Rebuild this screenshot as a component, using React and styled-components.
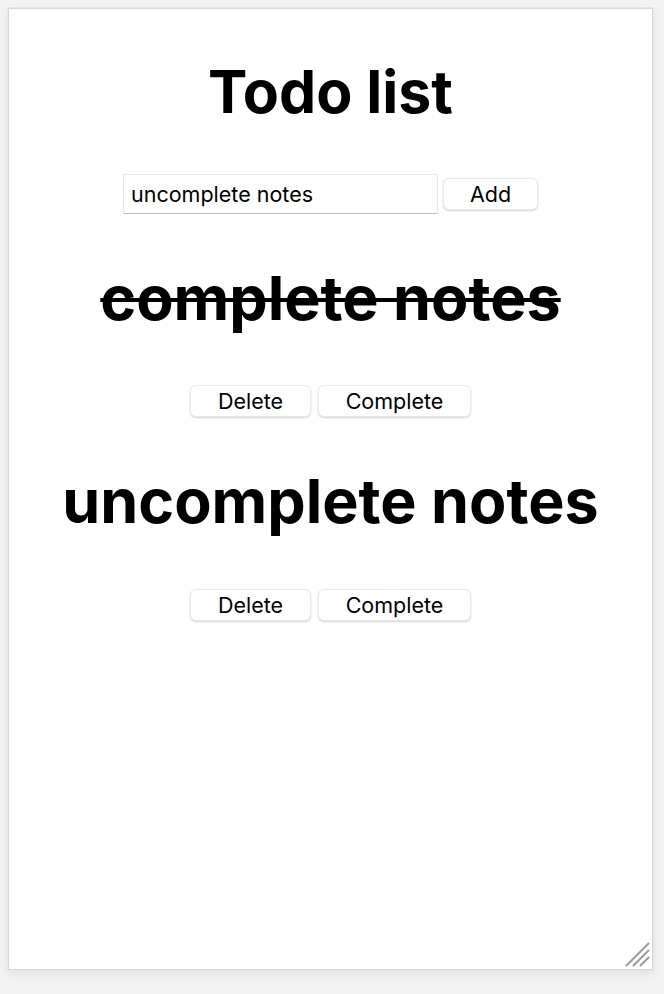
import React from "react";
import styled, { createGlobalStyle } from "styled-components";

const Global = createGlobalStyle`
  html, body { margin: 0; padding: 0; background: #f3f3f3; }
  body { font-family: Inter, "Noto Sans", sans-serif; color: #000; }
`;

const Stage = styled.div`
  padding: 8px 11px 22px 8px;
`;

const Panel = styled.div`
  position: relative;
  height: 960px;
  background: #fff;
  border: 1px solid #d6d6d6;
  box-shadow: 0 0 0 1px #e6e6e6, 0 4px 10px rgba(0, 0, 0, 0.08);
  display: flex;
  flex-direction: column;
  align-items: center;
`;

const Title = styled.h1`
  margin: 43px 0 0;
  font-size: 59px;
  line-height: 80px;
  font-weight: 700;
`;

const Form = styled.div`
  display: flex;
  align-items: center;
  gap: 5px;
  margin-top: 42px;
`;

const Input = styled.input`
  box-sizing: border-box;
  width: 315px;
  height: 40px;
  border: 1px solid #e6e6e6;
  border-bottom: 1px solid #bdbdbd;
  padding: 0 7px;
  font-family: Inter, sans-serif;
  font-size: 21.5px;
  color: #000;
  outline: none;
`;

const Button = styled.button`
  box-sizing: border-box;
  width: ${(p) => p.w}px;
  height: 32px;
  background: #fff;
  border: 1px solid #e8e8e8;
  border-radius: 6px;
  box-shadow: 0 1px 2px rgba(0, 0, 0, 0.18);
  font-family: Inter, sans-serif;
  font-size: 21.5px;
  color: #000;
  padding: 0;
  cursor: pointer;
`;

const Item = styled.div`
  display: flex;
  flex-direction: column;
  align-items: center;
`;

const Note = styled.h2`
  margin: 49px 0 0;
  font-size: 61px;
  line-height: 70px;
  font-weight: 700;
  text-decoration: ${(p) => (p.done ? "line-through" : "none")};
  text-decoration-thickness: 4px;
`;

const Actions = styled.div`
  display: flex;
  gap: 7px;
  margin-top: ${(p) => p.mt}px;
`;

const Grip = styled.svg`
  position: absolute;
  right: 2px;
  bottom: 2px;
`;

const notes = [
  { text: "complete notes", done: true },
  { text: "uncomplete notes", done: false },
];

export default function App() {
  return (
    <>
      <Global />
      <Stage>
        <Panel>
          <Title>Todo list</Title>
          <Form>
            <Input defaultValue="uncomplete notes" />
            <Button w={95}>Add</Button>
          </Form>
          {notes.map((n, i) => (
            <Item key={i}>
              <Note done={n.done}>{n.text}</Note>
              <Actions mt={i === 0 ? 52 : 53}>
                <Button w={121}>Delete</Button>
                <Button w={153}>Complete</Button>
              </Actions>
            </Item>
          ))}
          <Grip width="26" height="26" viewBox="0 0 26 26">
            <g stroke="#9a9a9a" strokeWidth="2">
              <line x1="2" y1="25" x2="25" y2="2" />
              <line x1="9" y1="25" x2="25" y2="9" />
              <line x1="16" y1="25" x2="25" y2="16" />
            </g>
          </Grip>
        </Panel>
      </Stage>
    </>
  );
}
